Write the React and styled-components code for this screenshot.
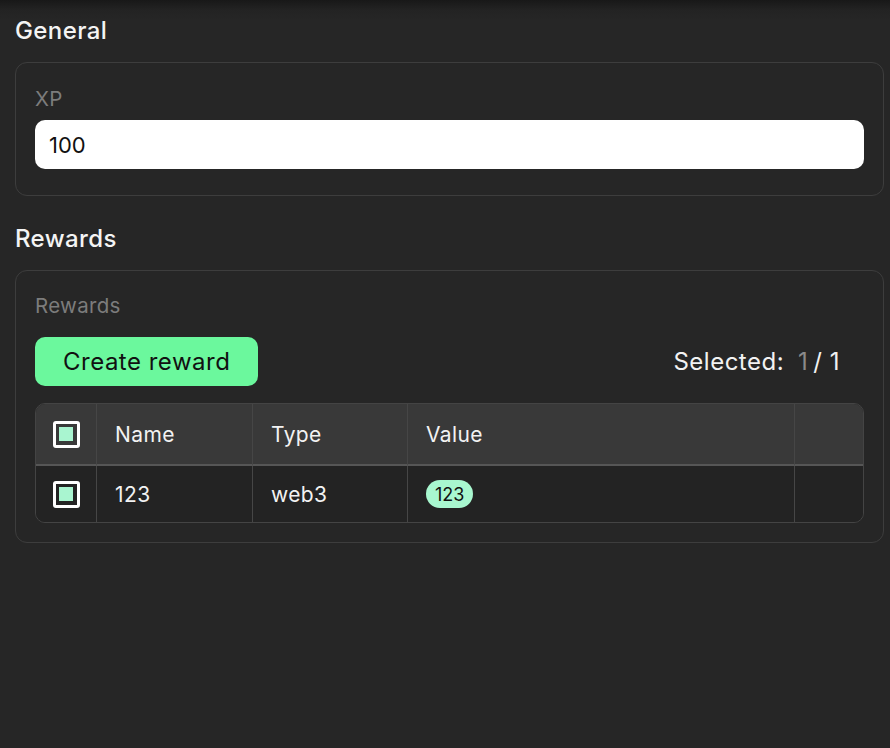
import React from 'react';
import styled, { createGlobalStyle } from 'styled-components';

const GlobalStyle = createGlobalStyle`
  html, body {
    margin: 0;
    background: #262626;
  }
  body {
    font-family: Inter, "Noto Sans", "Liberation Sans", sans-serif;
    color: #f2f2f2;
    min-height: 748px;
    background: linear-gradient(#181818 0px, #232323 10px, #262626 20px) no-repeat, #262626;
  }
`;

const Page = styled.div`
  padding: 16px 6px 40px 15px;
  display: flex;
  flex-direction: column;
`;

const Heading = styled.h2`
  margin: 0;
  font-size: 24px;
  line-height: 30px;
  letter-spacing: 0.4px;
  font-weight: 500;
  color: #f4f4f4;
  margin-top: ${(p) => (p.$first ? '0' : '28px')};
`;

const Card = styled.section`
  margin-top: 16px;
  border: 1.5px solid #3d3d3d;
  border-radius: 12px;
  padding: ${(p) => p.$pad || '23px 19px 19px'};
  display: flex;
  flex-direction: column;
`;

const Label = styled.label`
  font-size: 20.5px;
  line-height: 24px;
  letter-spacing: 0.3px;
  color: #7c7c7c;
`;

const Input = styled.input`
  margin-top: 9px;
  height: 49px;
  box-sizing: border-box;
  border: none;
  border-radius: 10px;
  background: #fff;
  padding: 0 14px;
  font: inherit;
  font-size: 22px;
  color: #111;
  outline: none;
`;

const Toolbar = styled.div`
  margin-top: 19px;
  display: flex;
  align-items: center;
  justify-content: space-between;
`;

const Button = styled.button`
  height: 49px;
  padding: 0 28px;
  border: none;
  border-radius: 10px;
  background: #6bf89d;
  color: #111;
  font: inherit;
  font-size: 24px;
  letter-spacing: 0.5px;
  cursor: pointer;
`;

const Selected = styled.div`
  margin-right: 24px;
  font-size: 24px;
  letter-spacing: 0.5px;
  color: #f2f2f2;
  display: flex;
  gap: 5px;
`;

const Muted = styled.span`
  color: #8a8a8a;
  margin-left: 9px;
`;

const Table = styled.div`
  margin-top: 17px;
  border: 1px solid #444;
  border-radius: 10px;
  overflow: hidden;
  display: grid;
  grid-template-columns: 61px 156px 155px 1fr 68px;
`;

const Cell = styled.div`
  display: flex;
  align-items: center;
  justify-content: ${(p) => (p.$center ? 'center' : 'flex-start')};
  padding-left: ${(p) => (p.$center ? '0' : '18px')};
  height: ${(p) => (p.$head ? '60px' : '56px')};
  background: ${(p) => (p.$head ? '#393939' : '#232323')};
  border-right: ${(p) => (p.$last ? 'none' : '1px solid #464646')};
  border-bottom: ${(p) => (p.$head ? '2px solid #565656' : 'none')};
  font-size: 21px;
  letter-spacing: 0.4px;
  color: #f2f2f2;
`;

const Check = styled.span`
  width: 27px;
  height: 27px;
  box-sizing: border-box;
  border: 3px solid #fff;
  border-radius: 3px;
  display: flex;
  align-items: center;
  justify-content: center;

  &::after {
    content: '';
    width: 14px;
    height: 14px;
    background: #a9f5d0;
  }
`;

const Pill = styled.span`
  height: 28px;
  padding: 0 9px;
  border-radius: 14px;
  background: #a8f7cf;
  color: #111;
  font-size: 18px;
  letter-spacing: 0;
  display: flex;
  align-items: center;
`;

const columns = ['Name', 'Type', 'Value'];
const rows = [{ name: '123', type: 'web3', value: '123' }];

export default function App() {
  return (
    <>
      <GlobalStyle />
      <Page>
        <Heading $first>General</Heading>
        <Card $pad="24px 19px 26px">
          <Label>XP</Label>
          <Input defaultValue="100" />
        </Card>

        <Heading>Rewards</Heading>
        <Card>
          <Label>Rewards</Label>
          <Toolbar>
            <Button>Create reward</Button>
            <Selected>
              Selected:<Muted>1</Muted>/ 1
            </Selected>
          </Toolbar>
          <Table>
            <Cell $head $center>
              <Check />
            </Cell>
            {columns.map((c) => (
              <Cell $head key={c}>
                {c}
              </Cell>
            ))}
            <Cell $head $last />
            {rows.map((r) => (
              <React.Fragment key={r.name}>
                <Cell $center>
                  <Check />
                </Cell>
                <Cell>{r.name}</Cell>
                <Cell>{r.type}</Cell>
                <Cell>
                  <Pill>{r.value}</Pill>
                </Cell>
                <Cell $last />
              </React.Fragment>
            ))}
          </Table>
        </Card>
      </Page>
    </>
  );
}
